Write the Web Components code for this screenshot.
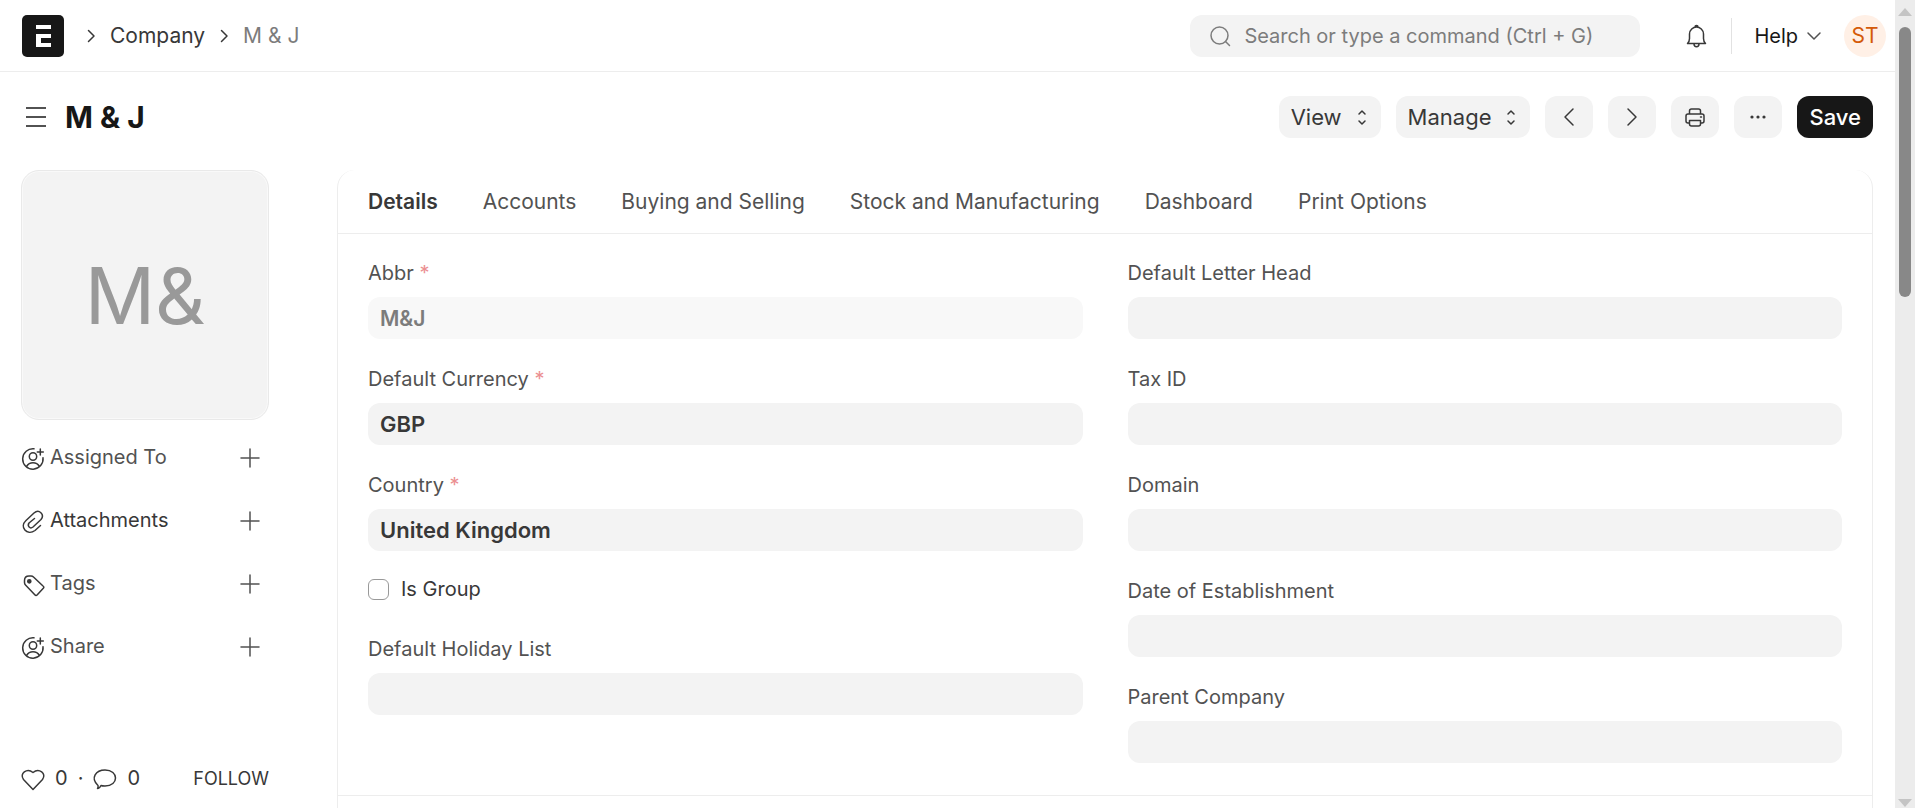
<!DOCTYPE html>
<html lang="en">
<head>
<meta charset="utf-8">
<meta name="viewport" content="width=device-width, initial-scale=1">
<title>M &amp; J</title>
<style>
  :root {
    --text: #383838;
    --text-strong: #171717;
    --text-light: #525252;
    --text-muted: #7c7c7c;
    --border: #ededed;
    --control: #f3f3f3;
  }
  body {
    margin: 0;
    font-family: Inter, "Liberation Sans", sans-serif;
    font-size: 21px;
    line-height: 30px;
    color: var(--text);
    background: #fff;
  }
</style>
</head>
<body>
<company-page></company-page>

<script>
const ICONS = {
  logo: `<rect width="42" height="42" rx="5" fill="#171717"/><path d="M14 10h15v4H14zM14 19h15v4h-10v5h10v4H14z" fill="#fff"/>`,
  crumb: `<path d="M1.5 1.5 7 7l-5.500 5.500"/>`,
  menu: `<path d="M0 1h20M0 10h20M0 19h20" stroke="#525252" stroke-width="2" stroke-linecap="butt"/>`,
  search: `<circle cx="9.500" cy="9.500" r="8.500"/><path d="m15.500 15.500 4 4"/>`,
  bell: `<path d="M1.500 18.500h18c-1-1-2-2.500-2-5V9C17.500 5 14 2 10.500 2S3.500 5 3.500 9v4.500c0 2.500-1 4-2 5zM8 19c0 3.500 5 3.500 5 0M9 2c0-2 3-2 3 0"/>`,
  down: `<path d="m1 1 6 6 6-6"/>`,
  select: `<path d="m1 4 3-3 3 3M1 11l3 3 3-3"/>`,
  prev: `<path d="M9 1 1 9l8 8"/>`,
  next: `<path d="m1 1 8 8-8 8"/>`,
  print: `<path d="M4.500 6V3q0-2 2-2h7q2 0 2 2v3M4.500 15H3q-2 0-2-2V8q0-2 2-2h14q2 0 2 2v5q0 2-2 2h-1.500M4.500 12.500h11V16q0 2-2 2h-7q-2 0-2-2zM15.500 9h1"/>`,
  dots: `<g fill="currentColor" stroke="none"><circle cx="2" cy="2" r="1.600"/><circle cx="8" cy="2" r="1.600"/><circle cx="14" cy="2" r="1.600"/></g>`,
  assign: `<path d="M13 2.800A10.200 10.200 0 1 0 22 11.700M5.500 20.500c3-5 10-5 13 0M19.300 3v6M16.300 6h6"/><circle cx="12" cy="10.500" r="3.700"/>`,
  clip: `<path d="M19.500 16.500 14 21.500C6 27-2 18 5 11.500L13 4c5-4.500 11 1.500 7 6.500l-8 7.500c-3 2.500-6-1-4-4l5.500-4.500"/>`,
  tag: `<path d="M3.500 10.500v-2Q3.500 4 8 4h2q1.500 0 2.500 1L22 14q1.500 1 .3 2.300l-6 6.500q-1.300 1.300-2.500 0L4.500 13q-1-1-1-2.500z"/><circle cx="8.300" cy="9.300" r="1.600" fill="currentColor"/>`,
  plus: `<path d="M9 0v18M0 9h18"/>`,
  heart: `<path d="M12 22.500 2.500 12.500C-2 6.500 6 .5 12 5.500c6-5 14 1 9.500 7z"/>`,
  comment: `<path d="M5 18.500C-3 11 3 3 12 3c14 0 14 16 0 16-2 0-3 0-4-.500-1 2-2.500 3-3.500 3q1-1 .500-3z"/>`,
};

// Wraps markup and styles in an open shadow root
class BaseElement extends HTMLElement {
  connectedCallback() {
    if (this.shadowRoot) return;
    this.attachShadow({ mode: "open" }).innerHTML = this.template();
  }
}

class UiIcon extends BaseElement {
  template() {
    const w = this.getAttribute("w");
    const h = this.getAttribute("h") || w;
    return `
      <style>
        :host { display: inline-flex; flex: none; }
        svg { display: block; overflow: visible; fill: none; stroke: currentColor; stroke-width: 1.5; stroke-linecap: round; stroke-linejoin: round; }
        svg.logo { stroke: none; }
      </style>
      <svg class="${this.getAttribute("name")}" width="${w}" height="${h}" viewBox="0 0 ${w} ${h}" aria-hidden="true">${ICONS[this.getAttribute("name")]}</svg>
    `;
  }
}

class NavBar extends BaseElement {
  template() {
    return `
      <style>
        :host { display: flex; align-items: center; justify-content: space-between; padding: 15px 9px 14px 22px; border-bottom: 1px solid var(--border); }
        nav, .right { display: flex; align-items: center; }
        a { color: var(--text); text-decoration: none; }
        nav .home { display: flex; margin-right: 23px; }
        nav a:nth-of-type(2) { margin: 0 15px; }
        nav span { margin-left: 15px; color: var(--text-muted); }
        .search { display: flex; align-items: center; gap: 14px; box-sizing: border-box; width: 450px; height: 42px; padding: 0 20px; border-radius: 12px; background: var(--control); color: var(--text-muted); }
        input { flex: 1; min-width: 0; padding: 0; border: 0; outline: 0; background: none; font: inherit; font-size: 20px; }
        input::placeholder { color: var(--text-muted); opacity: 1; }
        button { display: flex; align-items: center; padding: 0; border: 0; background: none; font: inherit; color: var(--text); cursor: pointer; }
        .bell { margin: 0 24px 0 46px; }
        .help { gap: 9px; padding-left: 22px; height: 36px; border-left: 1px solid #e2e2e2; font-size: 20px; color: #171717; }
        .help ui-icon { color: var(--text-light); }
        .user { justify-content: center; width: 42px; height: 42px; margin-left: 23px; border-radius: 50%; background: #fff0e6; color: #d45a08; }
      </style>
      <nav aria-label="Breadcrumb">
        <a class="home" href="#" aria-label="Home"><ui-icon name="logo" w="42"></ui-icon></a>
        <ui-icon name="crumb" w="8" h="14"></ui-icon>
        <a href="#company">Company</a>
        <ui-icon name="crumb" w="8" h="14"></ui-icon>
        <span>M &amp; J</span>
      </nav>
      <div class="right">
        <label class="search">
          <ui-icon name="search" w="20"></ui-icon>
          <input type="text" aria-label="Search" placeholder="Search or type a command (Ctrl + G)">
        </label>
        <button class="bell" aria-label="Notifications"><ui-icon name="bell" w="21" h="22"></ui-icon></button>
        <button class="help">Help <ui-icon name="down" w="14" h="8"></ui-icon></button>
        <button class="user" aria-label="User menu">ST</button>
      </div>
    `;
  }
}

class UiButton extends BaseElement {
  template() {
    return `
      <style>
        :host { display: block; }
        button { display: flex; align-items: center; justify-content: center; gap: 16px; height: 42px; min-width: 48px; padding: 0 12px; border: 0; border-radius: 12px; background: var(--control); color: var(--text); font: inherit; font-size: 22px; cursor: pointer; }
        :host([menu]) button { padding-right: 15px; }
        :host([primary]) button { background: #171717; color: #fff; font-weight: 500; }
      </style>
      <button aria-label="${this.getAttribute("label") || this.textContent.trim()}"><slot></slot></button>
    `;
  }
}

class PageHead extends BaseElement {
  template() {
    return `
      <style>
        :host { display: flex; align-items: center; justify-content: space-between; padding: 24px 22px 32px 26px; }
        .title { display: flex; align-items: center; gap: 19px; }
        .toggle { display: flex; padding: 0; border: 0; background: none; color: inherit; }
        h1 { margin: 0; font-size: 30px; line-height: 42px; font-weight: 700; color: var(--text-strong); }
        .actions { display: flex; gap: 15px; }
      </style>
      <div class="title">
        <button class="toggle" aria-label="Toggle sidebar"><ui-icon name="menu" w="20"></ui-icon></button>
        <h1>M &amp; J</h1>
      </div>
      <div class="actions">
        <ui-button menu>View <ui-icon name="select" w="8" h="15"></ui-icon></ui-button>
        <ui-button menu>Manage <ui-icon name="select" w="8" h="15"></ui-icon></ui-button>
        <ui-button label="Previous"><ui-icon name="prev" w="10" h="18"></ui-icon></ui-button>
        <ui-button label="Next"><ui-icon name="next" w="10" h="18"></ui-icon></ui-button>
        <ui-button label="Print"><ui-icon name="print" w="20" h="19"></ui-icon></ui-button>
        <ui-button label="More"><ui-icon name="dots" w="16" h="4"></ui-icon></ui-button>
        <ui-button primary>Save</ui-button>
      </div>
    `;
  }
}

class SideItem extends BaseElement {
  template() {
    return `
      <style>
        :host { display: flex; align-items: center; gap: 5px; color: var(--text); }
        .label { flex: 1; color: var(--text-light); }
        :host([active]) .label { color: var(--text); }
        button { display: flex; padding: 0; margin-right: 10px; border: 0; background: none; color: var(--text-light); cursor: pointer; }
      </style>
      <ui-icon name="${this.getAttribute("icon")}" w="24"></ui-icon>
      <span class="label"><slot></slot></span>
      <button aria-label="Add ${this.textContent}"><ui-icon name="plus" w="18"></ui-icon></button>
    `;
  }
}

class FormSidebar extends BaseElement {
  template() {
    return `
      <style>
        :host { display: block; width: 248px; flex: none; font-size: 20px; line-height: 27px; }
        .avatar { display: flex; align-items: center; justify-content: center; height: 248px; border: 1px solid #e9e9e9; border-radius: 18px; box-shadow: inset 0 0 0 1px #f9f9f9; background: var(--control); color: #999; font-size: 78px; }
        .items { display: flex; flex-direction: column; gap: 36px; margin-top: 24px; }
        .stats { display: flex; align-items: center; margin-top: 105px; }
        button { display: flex; align-items: center; gap: 10px; padding: 0; border: 0; background: none; font: inherit; color: var(--text); cursor: pointer; }
        .dot { margin: 0 10px; }
        .follow { margin-left: auto; font-size: 18px; }
      </style>
      <div class="avatar">M&amp;</div>
      <div class="items">
        <side-item icon="assign">Assigned To</side-item>
        <side-item icon="clip" active>Attachments</side-item>
        <side-item icon="tag">Tags</side-item>
        <side-item icon="assign">Share</side-item>
      </div>
      <div class="stats">
        <button><ui-icon name="heart" w="24"></ui-icon>0</button>
        <span class="dot">·</span>
        <button><ui-icon name="comment" w="24"></ui-icon>0</button>
        <button class="follow">FOLLOW</button>
      </div>
    `;
  }
}

class FormTabs extends BaseElement {
  template() {
    return `
      <style>
        :host { display: block; border-bottom: 1px solid var(--border); }
        nav { display: flex; gap: 45px; padding: 17px 30px 16px; }
        a { color: var(--text-light); text-decoration: none; white-space: nowrap; }
        a[aria-current] { color: var(--text); font-weight: 600; }
      </style>
      <nav>
        <a href="#details" aria-current="true">Details</a>
        <a href="#accounts">Accounts</a>
        <a href="#buying">Buying and Selling</a>
        <a href="#stock">Stock and Manufacturing</a>
        <a href="#dashboard">Dashboard</a>
        <a href="#print">Print Options</a>
      </nav>
    `;
  }
}

class FormField extends BaseElement {
  template() {
    const required = this.hasAttribute("required");
    return `
      <style>
        :host { display: block; }
        label { display: block; margin-bottom: 9px; font-size: 20px; color: var(--text-light); }
        span { color: #eb9091; }
        input { display: block; box-sizing: border-box; width: 100%; height: 42px; padding: 0 12px; border: 0; border-radius: 12px; background: var(--control); font: inherit; font-size: 22px; font-weight: 600; color: var(--text); }
        input:read-only { background: #f8f8f8; color: var(--text-muted); font-size: 21px; }
      </style>
      <label for="control">${this.getAttribute("label")}${required ? " <span>*</span>" : ""}</label>
      <input id="control" type="text" value="${this.getAttribute("value") || ""}" ${this.hasAttribute("readonly") ? "readonly" : ""}>
    `;
  }
}

class FormCheck extends BaseElement {
  template() {
    return `
      <style>
        :host { display: block; padding: 3px 0 9px; }
        label { display: flex; align-items: center; gap: 12px; font-size: 20px; line-height: 21px; }
        input { appearance: none; width: 21px; height: 21px; margin: 0; border: 1px solid #999; border-radius: 6px; background: #fff; }
        input:checked { background: #171717; }
      </style>
      <label><input type="checkbox"><slot></slot></label>
    `;
  }
}

class CompanyForm extends BaseElement {
  template() {
    return `
      <style>
        :host { display: block; flex: 1; min-width: 0; border: 1px solid var(--border); border-top: 0; border-bottom: 0; border-radius: 18px 18px 0 0; }
        form { display: grid; grid-template-columns: 1fr 1fr; gap: 45px; padding: 24px 30px 32px; border-bottom: 1px solid var(--border); }
        .column { display: flex; flex-direction: column; gap: 25px; }
      </style>
      <form-tabs></form-tabs>
      <form>
        <div class="column">
          <form-field label="Abbr" value="M&amp;amp;J" required readonly></form-field>
          <form-field label="Default Currency" value="GBP" required></form-field>
          <form-field label="Country" value="United Kingdom" required></form-field>
          <form-check>Is Group</form-check>
          <form-field label="Default Holiday List"></form-field>
        </div>
        <div class="column">
          <form-field label="Default Letter Head"></form-field>
          <form-field label="Tax ID"></form-field>
          <form-field label="Domain"></form-field>
          <form-field label="Date of Establishment"></form-field>
          <form-field label="Parent Company"></form-field>
        </div>
      </form>
    `;
  }
}

class ScrollTrack extends BaseElement {
  template() {
    return `
      <style>
        :host { display: flex; flex-direction: column; align-items: center; justify-content: space-between; box-sizing: border-box; flex: none; width: 20px; padding: 8px 0 1px; background: #ececec; }
        .up, .down { border: 7px solid transparent; border-top: 0; border-bottom: 8px solid #c4c4c4; }
        .down { border-bottom: 0; border-top: 8px solid #c4c4c4; }
        .lane { flex: 1; width: 12px; padding-top: 11px; }
        .thumb { height: 35%; border-radius: 6px; background: #888; }
      </style>
      <div class="up"></div>
      <div class="lane"><div class="thumb"></div></div>
      <div class="down"></div>
    `;
  }
}

class CompanyPage extends BaseElement {
  template() {
    return `
      <style>
        :host { display: flex; height: 100vh; overflow: hidden; }
        .page { display: flex; flex-direction: column; flex: 1; min-width: 0; }
        main { display: flex; flex: 1; gap: 68px; padding: 0 22px 0 21px; }
      </style>
      <div class="page">
        <nav-bar></nav-bar>
        <page-head></page-head>
        <main>
          <form-sidebar></form-sidebar>
          <company-form></company-form>
        </main>
      </div>
      <scroll-track></scroll-track>
    `;
  }
}

customElements.define("ui-icon", UiIcon);
customElements.define("ui-button", UiButton);
customElements.define("nav-bar", NavBar);
customElements.define("page-head", PageHead);
customElements.define("side-item", SideItem);
customElements.define("form-sidebar", FormSidebar);
customElements.define("form-tabs", FormTabs);
customElements.define("form-field", FormField);
customElements.define("form-check", FormCheck);
customElements.define("company-form", CompanyForm);
customElements.define("scroll-track", ScrollTrack);
customElements.define("company-page", CompanyPage);
</script>
</body>
</html>
